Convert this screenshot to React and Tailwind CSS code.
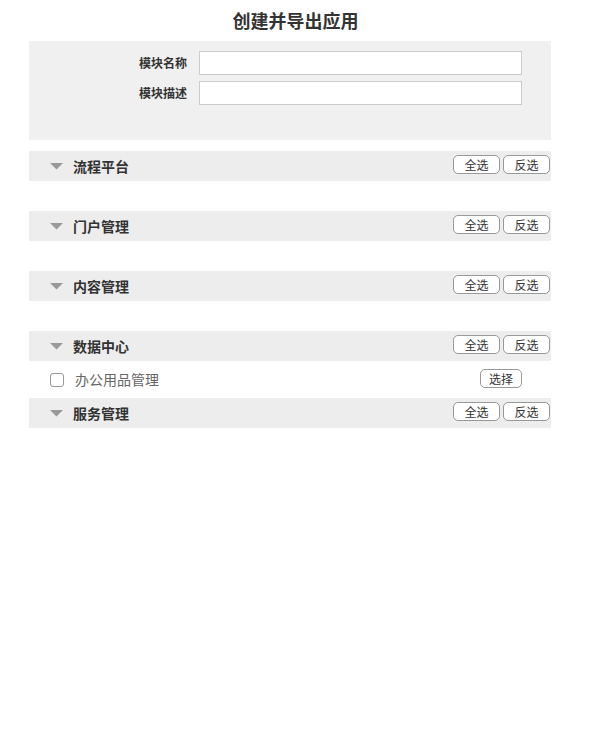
import React from 'react';

const groups = [
  { name: '流程平台', items: [] },
  { name: '门户管理', items: [] },
  { name: '内容管理', items: [] },
  { name: '数据中心', items: ['办公用品管理'] },
  { name: '服务管理', items: null },
];

function SmallButton({ children, className = '' }) {
  return (
    <button
      className={`h-[19px] rounded-[5px] border border-[#999] bg-white text-[12px] leading-[17px] text-[#333] ${className}`}
    >
      {children}
    </button>
  );
}

function Triangle() {
  return (
    <svg width="13" height="7" viewBox="0 0 13 7" className="shrink-0">
      <path d="M0 0 L13 0 L6.5 6.5 Z" fill="#999" />
    </svg>
  );
}

function Group({ name, items }) {
  return (
    <div>
      <div className="flex h-[30px] items-center bg-[#ededed] pl-[21px] pr-[1px]">
        <Triangle />
        <span className="ml-[10px] text-[14px] font-bold text-[#333]">{name}</span>
        <div className="mb-[3px] ml-auto flex gap-[3px]">
          <SmallButton className="w-[47px]">全选</SmallButton>
          <SmallButton className="w-[47px]">反选</SmallButton>
        </div>
      </div>
      {items && items.length === 0 && <div className="h-[30px]" />}
      {items &&
        items.map((it) => (
          <div key={it} className="flex h-[37px] items-center pl-[21px] pr-[29px]">
            <span className="h-[14px] w-[14px] shrink-0 rounded-[3px] border border-[#999] bg-white" />
            <span className="ml-[11px] text-[14px] text-[#666]">{it}</span>
            <SmallButton className="mb-[2px] ml-auto w-[42px]">选择</SmallButton>
          </div>
        ))}
    </div>
  );
}

export default function App() {
  return (
    <div
      className="min-h-[739px] w-[591px] bg-white"
      style={{ fontFamily: '"Noto Sans CJK SC", "Noto Sans", sans-serif' }}
    >
      <div className="flex h-[41px] items-center justify-center text-[18px] font-bold text-[#333]">
        创建并导出应用
      </div>

      <div className="ml-[29px] w-[522px]">
        {/* module form */}
        <div className="flex h-[99px] flex-col gap-[6px] bg-[#f0f0f0] pt-[10px]">
          {['模块名称', '模块描述'].map((label) => (
            <div key={label} className="flex items-center">
              <label className="w-[170px] shrink-0 pr-[12px] text-right text-[12px] font-bold text-[#333]">
                {label}
              </label>
              <input
                type="text"
                className="h-[24px] w-[323px] border border-[#ccc] bg-white px-1 text-[12px] outline-none"
              />
            </div>
          ))}
        </div>

        <div className="mt-[11px] flex flex-col">
          {groups.map((g) => (
            <Group key={g.name} name={g.name} items={g.items} />
          ))}
        </div>
      </div>
    </div>
  );
}
